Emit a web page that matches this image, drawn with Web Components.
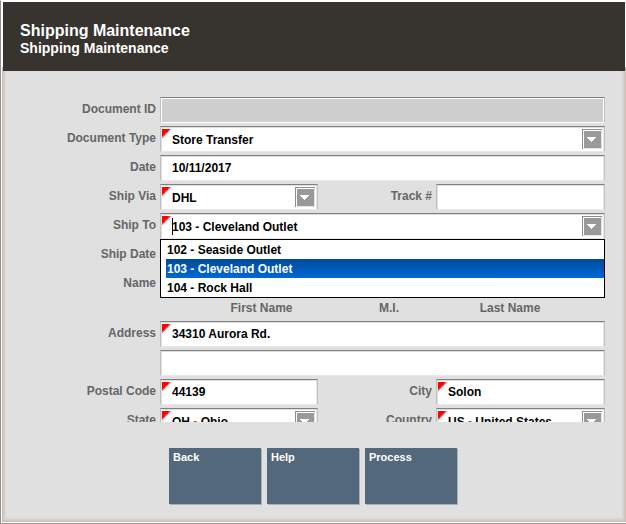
<!DOCTYPE html>
<html lang="en">
<head>
<meta charset="utf-8">
<meta name="viewport" content="width=device-width, initial-scale=1">
<title>Shipping Maintenance</title>
<style>
  body {
    font-family: "Liberation Sans", Arial, sans-serif;
    font-size: 12px;
    font-weight: bold;
    margin: 0;
  }
</style>
</head>
<body>
  <app-window>
    <page-header slot="header" heading="Shipping Maintenance" subheading="Shipping Maintenance"></page-header>

    <form-field label="Document ID" disabled></form-field>
    <form-field label="Document Type" type="select" value="Store Transfer" required></form-field>
    <form-field label="Date" value="10/11/2017"></form-field>
    <field-row>
      <form-field label="Ship Via" type="select" value="DHL" required></form-field>
      <form-field class="second" label="Track #"></form-field>
    </field-row>
    <form-field label="Ship To" type="combo" value="103 - Cleveland Outlet" required
      options="102 - Seaside Outlet|103 - Cleveland Outlet|104 - Rock Hall"></form-field>
    <form-field label="Ship Date"></form-field>
    <name-field></name-field>
    <form-field label="Address" value="34310 Aurora Rd." required></form-field>
    <form-field label="" name="Address line 2"></form-field>
    <field-row>
      <form-field label="Postal Code" value="44139" required></form-field>
      <form-field class="second" label="City" value="Solon" required></form-field>
    </field-row>
    <field-row>
      <form-field label="State" type="select" value="OH - Ohio" required></form-field>
      <form-field class="second" label="Country" type="select" value="US - United States" required></form-field>
    </field-row>

    <action-button slot="actions">Back</action-button>
    <action-button slot="actions">Help</action-button>
    <action-button slot="actions">Process</action-button>
  </app-window>

<script>
// look shared by every element that draws a label and a control
const fieldStyles = /* css */`
  * {
    box-sizing: border-box;
  }

  label {
    color: #666;
    line-height: 16px;
  }

  .box {
    background-color: #fff;
    border: 1px solid #c0c0c0;
    border-bottom-color: #e8e8e8;
    border-top-color: #808080;
    box-shadow: inset 1px 1px 0 #dedede, inset -1px 0 0 #e8e8e8;
    flex: 1;
    height: 26px;
    min-width: 0;
    position: relative;
  }

  input, select {
    appearance: none;
    background: transparent;
    border: none;
    color: #000;
    display: block;
    font: inherit;
    height: 24px;
    margin: 0;
    outline: none;
    padding: 0 24px 0 11px;
    width: 100%;
  }
`

class AppWindow extends HTMLElement {
  constructor () {
    super()
    this.shadow = this.attachShadow({ mode: 'open' })
  }

  connectedCallback () {
    this.shadow.innerHTML =
      /* html */`
        <style>
          :host {
            border: solid #fff;
            border-bottom-color: #999;
            border-left-color: #909090;
            border-width: 1px 0 1px 1px;
            box-sizing: border-box;
            display: flex;
            flex-direction: column;
            height: 100vh;
            padding: 1px 0 1px 1px;
          }

          main {
            background-color: #e0e0e0;
            box-shadow:
              inset 0 0 0 1px #cabfb7,
              inset 0 0 0 2px #d3c9c1,
              inset 0 0 0 3px #d9d0c9,
              inset 0 0 0 4px #ddd7d2;
            box-sizing: border-box;
            display: flex;
            flex: 1;
            flex-direction: column;
            min-height: 0;
            padding: 0 5px 4px 4px;
          }

          form {
            display: flex;
            flex: 1;
            flex-direction: column;
            gap: 3px;
            min-height: 0;
            overflow: hidden;
            padding: 26px 16px 0 14px;
          }

          footer {
            display: flex;
            gap: 6px;
            padding: 26px 16px 14px 163px;
          }

          /* the header covers the top edge of the frame */
          ::slotted(page-header) {
            margin: 0 1px -4px;
            position: relative;
          }

          main {
            padding-top: 4px;
          }
        </style>
        <slot name="header"></slot>
        <main>
          <form><slot></slot></form>
          <footer><slot name="actions"></slot></footer>
        </main>
      `
  }
}

class PageHeader extends HTMLElement {
  constructor () {
    super()
    this.shadow = this.attachShadow({ mode: 'open' })
  }

  connectedCallback () {
    this.shadow.innerHTML =
      /* html */`
        <style>
          :host {
            background-color: #37332e;
            color: #fff;
            display: block;
            padding: 20px 17px 15px;
          }

          h1, h2 {
            margin: 0;
          }

          h1 {
            font-size: 16px;
            line-height: 18px;
          }

          h2 {
            font-size: 14px;
            line-height: 16px;
          }
        </style>
        <h1>${this.getAttribute('heading')}</h1>
        <h2>${this.getAttribute('subheading')}</h2>
      `
  }
}

class FieldRow extends HTMLElement {
  constructor () {
    super()
    this.shadow = this.attachShadow({ mode: 'open' })
  }

  connectedCallback () {
    this.shadow.innerHTML =
      /* html */`
        <style>
          :host {
            display: grid;
            flex-shrink: 0;
            grid-template-columns: 298fr 287fr;
          }

          ::slotted(.second) {
            --label-width: 114px;
          }
        </style>
        <slot></slot>
      `
  }
}

class FormField extends HTMLElement {
  constructor () {
    super()
    this.shadow = this.attachShadow({ mode: 'open' })
  }

  connectedCallback () {
    this.type = this.getAttribute('type') || 'text'
    this.render()
  }

  render () {
    const label = this.getAttribute('label')
    const hasArrow = this.type !== 'text'

    this.shadow.innerHTML =
      /* html */`
        <style>
          ${fieldStyles}

          :host {
            display: flex;
            flex-shrink: 0;
            gap: 4px;
          }

          label {
            padding-top: 4px;
            text-align: right;
            width: var(--label-width, 136px);
          }

          :host([disabled]) .box {
            background-color: #cfcfcf;
            border-bottom-color: #fff;
            box-shadow: inset 1px 1px 0 #fff, inset -1px 0 0 #fff;
          }

          select, .combo {
            padding-top: 2px;
          }

          .combo {
            caret-color: transparent;
          }

          .corner, .arrow {
            pointer-events: none;
            position: absolute;
            top: 2px;
          }

          .corner {
            left: 1px;
          }

          .arrow {
            right: 2px;
          }

          .caret {
            background-color: #000;
            height: 17px;
            left: 11px;
            position: absolute;
            top: 4px;
            width: 1px;
          }

          .list {
            background-color: #fff;
            border: 1px solid #000;
            left: -1px;
            list-style: none;
            margin: 0;
            padding: 0 0 0 5px;
            position: absolute;
            right: -1px;
            top: 25px;
            z-index: 1;
          }

          .list li {
            cursor: default;
            line-height: 17px;
            padding: 2px 0 0 1px;
          }

          .list li[aria-selected="true"] {
            background: linear-gradient(#004a98, #0068d8);
            color: #fff;
          }
        </style>
        <label for="control">${label}</label>
        <div class="box">
          ${this.control()}
          ${this.hasAttribute('required') ? this.corner() : ''}
          ${hasArrow ? this.arrow() : ''}
          ${this.type === 'combo' ? this.list() : ''}
        </div>
      `

    this.shadow.querySelectorAll('li').forEach(item => {
      item.addEventListener('click', () => {
        this.shadow.querySelector('[aria-selected="true"]').setAttribute('aria-selected', 'false')
        item.setAttribute('aria-selected', 'true')
        this.shadow.querySelector('input').value = item.textContent
      })
    })
  }

  control () {
    const value = this.getAttribute('value') || ''

    if (this.type === 'select') {
      return `<select id="control"><option>${value}</option></select>`
    }

    if (this.type === 'combo') {
      return `
        <input id="control" class="combo" type="text" role="combobox" aria-expanded="true" aria-controls="list" value="${value}">
        <span class="caret"></span>
      `
    }

    const name = this.hasAttribute('name') ? `aria-label="${this.getAttribute('name')}"` : ''
    return `<input id="control" type="text" value="${value}" ${name} ${this.hasAttribute('disabled') ? 'disabled' : ''}>`
  }

  // red flag of a required field, with a dithered slope
  corner () {
    return `
      <svg class="corner" width="9" height="9" viewBox="0 0 9 9" aria-hidden="true">
        <path d="M0 0h9L0 9z" fill="#f00"/>
        <path d="M8 0L0 8" stroke="#ff8080" stroke-dasharray="1 1"/>
      </svg>
    `
  }

  arrow () {
    return `
      <svg class="arrow" width="20" height="20" viewBox="0 0 20 20" shape-rendering="crispEdges" aria-hidden="true">
        <path d="M0 0h20v20H0z" fill="#e4e4e4"/>
        <path d="M0 0h20v1H1v19H0z" fill="#8c8c8c"/>
        <path d="M1 1h18v18H1z" fill="#fff"/>
        <path d="M2 2h17v17H2z" fill="#999"/>
        <path d="M5 8h9v1h-1v1h-1v1h-1v1h-1v1h-1v-1h-1v-1h-1v-1h-1v-1h-1z" fill="#fff"/>
      </svg>
    `
  }

  list () {
    const items = this.getAttribute('options').split('|').map(option =>
      `<li role="option" aria-selected="${option === this.getAttribute('value')}">${option}</li>`
    )
    return `<ul class="list" id="list" role="listbox" aria-label="${this.getAttribute('label')}">${items.join('')}</ul>`
  }
}

class NameField extends HTMLElement {
  constructor () {
    super()
    this.shadow = this.attachShadow({ mode: 'open' })
  }

  connectedCallback () {
    this.shadow.innerHTML =
      /* html */`
        <style>
          ${fieldStyles}

          :host {
            display: flex;
            flex-shrink: 0;
            gap: 4px;
          }

          .title {
            padding-top: 4px;
            text-align: right;
            width: 136px;
          }

          .parts {
            column-gap: 4px;
            display: grid;
            flex: 1;
            grid-template-columns: 203fr 44fr 190fr;
            row-gap: 3px;
          }

          .parts label {
            height: 18px;
            text-align: center;
          }
        </style>
        <label class="title" for="first">Name</label>
        <div class="parts">
          <div class="box"><input id="first" type="text"></div>
          <div class="box"><input id="middle" type="text"></div>
          <div class="box"><input id="last" type="text"></div>
          <label for="first">First Name</label>
          <label for="middle">M.I.</label>
          <label for="last">Last Name</label>
        </div>
      `
  }
}

class ActionButton extends HTMLElement {
  constructor () {
    super()
    this.shadow = this.attachShadow({ mode: 'open' })
  }

  connectedCallback () {
    this.shadow.innerHTML =
      /* html */`
        <style>
          :host {
            display: block;
          }

          button {
            align-items: flex-start;
            background-color: #54687d;
            border: none;
            box-shadow: 1px 1px 0 #a8b0b8;
            color: #fff;
            cursor: pointer;
            display: flex;
            font: inherit;
            font-size: 11px;
            height: 56px;
            line-height: 12px;
            padding: 3px 4px;
            width: 92px;
          }
        </style>
        <button type="button"><slot></slot></button>
      `
  }
}

customElements.define('app-window', AppWindow)
customElements.define('page-header', PageHeader)
customElements.define('field-row', FieldRow)
customElements.define('form-field', FormField)
customElements.define('name-field', NameField)
customElements.define('action-button', ActionButton)
</script>
</body>
</html>
